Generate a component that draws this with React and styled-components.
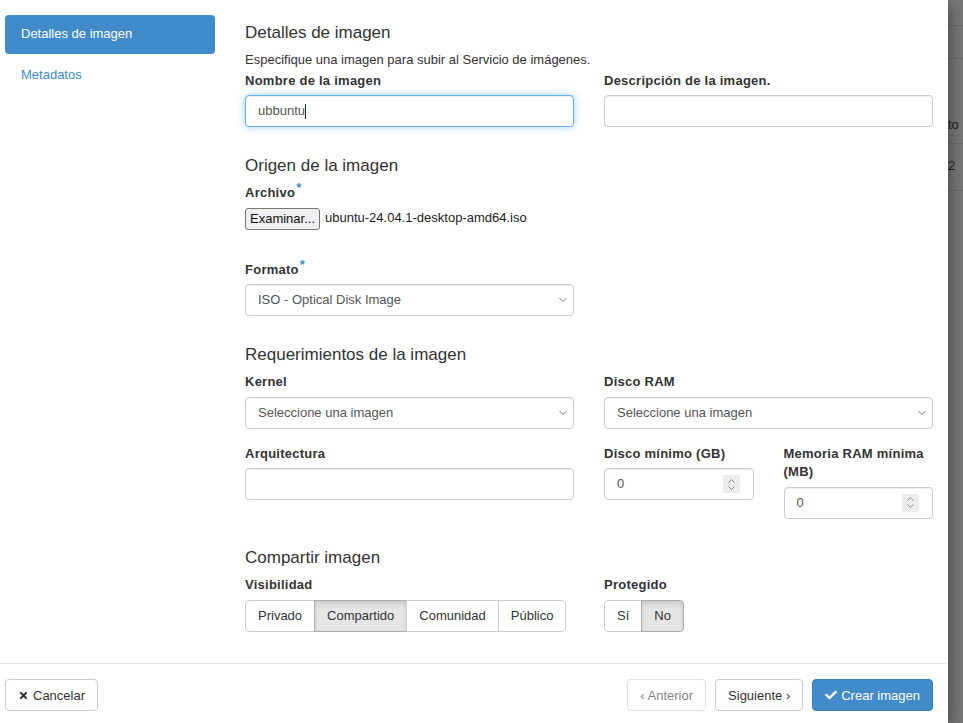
import React from "react";
import styled, { createGlobalStyle, css } from "styled-components";
import { FaTimes, FaCheck } from "react-icons/fa";

const GlobalStyle = createGlobalStyle`
  html, body {
    margin: 0;
    padding: 0;
  }
  body {
    font-family: "Liberation Sans", Arial, Helvetica, sans-serif;
    font-size: 13px;
    line-height: 1.42857;
    color: #333;
    background: #fff;
  }
  * { box-sizing: border-box; }
`;

const Page = styled.div`
  display: flex;
  height: 100vh;
  overflow: hidden;
`;

const Modal = styled.div`
  width: 948px;
  flex: none;
  display: flex;
  flex-direction: column;
  background: #fff;
  box-shadow: 0 5px 15px rgba(0, 0, 0, 0.5);
  position: relative;
  z-index: 1;
`;

const ModalBody = styled.div`
  flex: 1;
  display: flex;
  min-height: 0;
`;

const Sidebar = styled.nav`
  width: 230px;
  flex: none;
  padding: 15px 15px 0 5px;
  display: flex;
  flex-direction: column;
  gap: 2px;
`;

const NavItem = styled.a`
  height: 39px;
  display: flex;
  align-items: center;
  padding: 0 16px;
  border-radius: 4px;
  color: #428bca;
  text-decoration: none;
  ${(p) =>
    p.$active &&
    css`
      background: #428bca;
      color: #fff;
    `}
`;

const Content = styled.div`
  flex: 1;
  padding: 0 15px;
`;

const SectionTitle = styled.h4`
  font-size: 17px;
  font-weight: normal;
  line-height: 20px;
  margin: ${(p) => p.$mt ?? 14}px 0 8px;
`;

const Help = styled.p`
  margin: 0 0 2px;
`;

const Row = styled.div`
  display: grid;
  grid-template-columns: 1fr 1fr;
  column-gap: 30px;
  align-items: start;
`;

const Group = styled.div`
  margin-bottom: ${(p) => p.$mb ?? 15}px;
`;

const Label = styled.label`
  display: block;
  font-weight: bold;
  letter-spacing: 0.25px;
  margin-bottom: 5px;
`;

const Req = styled.span`
  color: #428bca;
  font-size: 13px;
  vertical-align: top;
  position: relative;
  top: -5px;
  margin-left: 1px;
`;

const field = css`
  height: 32px;
  width: 100%;
  display: flex;
  align-items: center;
  padding: 0 12px;
  border: 1px solid #ccc;
  border-radius: 4px;
  background: #fff;
  color: #555;
  font-family: inherit;
  font-size: 13px;
  box-shadow: inset 0 1px 1px rgba(0, 0, 0, 0.075);
`;

const Input = styled.input`
  ${field}
  outline: none;
`;

const FocusedField = styled.div`
  ${field}
  border-color: #66afe9;
  box-shadow: inset 0 1px 1px rgba(0, 0, 0, 0.075),
    0 0 8px rgba(102, 175, 233, 0.6);
`;

const Caret = styled.span`
  display: inline-block;
  width: 1px;
  height: 15px;
  background: #222;
`;

const SelectBox = styled.div`
  ${field}
  justify-content: space-between;
  padding-right: 5px;
`;

const NumberBox = styled.div`
  ${field}
  justify-content: space-between;
  padding-right: 13px;
`;

const Spinner = styled.span`
  width: 17px;
  height: 18px;
  border-radius: 2px;
  background: #ececec;
  display: flex;
  align-items: center;
  justify-content: center;
`;

const FileRow = styled.div`
  display: flex;
  align-items: center;
  gap: 5px;
`;

const FileButton = styled.button`
  height: 22px;
  padding: 0 4px;
  border: 1px solid #767676;
  border-radius: 3px;
  background: #efefef;
  color: #111;
  font-family: inherit;
  font-size: 13px;
`;

const FileName = styled.span`
  color: #222;
`;

const BtnGroup = styled.div`
  display: inline-flex;
`;

const Btn = styled.button`
  height: 32px;
  padding: 0 12px;
  display: inline-flex;
  align-items: center;
  gap: 4px;
  font-family: inherit;
  font-size: 13px;
  color: #333;
  background: #fff;
  border: 1px solid #ccc;
  border-radius: 4px;
  ${(p) =>
    p.$active &&
    css`
      background: #e6e6e6;
      border-color: #adadad;
      box-shadow: inset 0 3px 5px rgba(0, 0, 0, 0.125);
    `}
  ${(p) =>
    p.$primary &&
    css`
      background: #428bca;
      border-color: #357ebd;
      color: #fff;
    `}
  ${(p) =>
    p.$disabled &&
    css`
      opacity: 0.6;
    `}
  ${BtnGroup} & {
    border-radius: 0;
    margin-left: -1px;
  }
  ${BtnGroup} &:first-child {
    margin-left: 0;
    border-radius: 4px 0 0 4px;
  }
  ${BtnGroup} &:last-child {
    border-radius: 0 4px 4px 0;
  }
`;

const Footer = styled.div`
  border-top: 1px solid #e5e5e5;
  padding: 15px 15px 12px 5px;
  display: flex;
  align-items: center;
  justify-content: space-between;
`;

const FooterRight = styled.div`
  display: flex;
  gap: 9px;
`;

const Backdrop = styled.div`
  flex: 1;
  background: #777;
  overflow: hidden;
  color: #1e1e1e;
`;

const BackRow = styled.div`
  height: ${(p) => p.$h}px;
  border-bottom: 1px solid #6a6a6a;
  display: flex;
  align-items: flex-end;
  padding-bottom: ${(p) => p.$pb ?? 0}px;
  white-space: nowrap;
`;

const Chevron = () => (
  <svg width="10" height="6" viewBox="0 0 10 6">
    <polyline points="1.5,1 5,4.5 8.5,1" fill="none" stroke="#777" strokeWidth="1" />
  </svg>
);

const SpinIcon = () => (
  <Spinner>
    <svg width="9" height="13" viewBox="0 0 9 13">
      <polyline points="1.5,4.5 4.5,1.5 7.5,4.5" fill="none" stroke="#888" strokeWidth="1" />
      <polyline points="1.5,8.5 4.5,11.5 7.5,8.5" fill="none" stroke="#888" strokeWidth="1" />
    </svg>
  </Spinner>
);

export default function App() {
  return (
    <>
      <GlobalStyle />
      <Page>
        <Modal>
          <ModalBody>
            <Sidebar>
              <NavItem $active>Detalles de imagen</NavItem>
              <NavItem>Metadatos</NavItem>
            </Sidebar>
            <Content>
              <SectionTitle $mt={23}>Detalles de imagen</SectionTitle>
              <Help>Especifique una imagen para subir al Servicio de imágenes.</Help>
              <Row>
                <Group>
                  <Label>Nombre de la imagen</Label>
                  <FocusedField>
                    ubbuntu
                    <Caret />
                  </FocusedField>
                </Group>
                <Group>
                  <Label>Descripción de la imagen.</Label>
                  <Input />
                </Group>
              </Row>

              <SectionTitle>Origen de la imagen</SectionTitle>
              <Row>
                <Group $mb={31}>
                  <Label>
                    Archivo<Req>*</Req>
                  </Label>
                  <FileRow>
                    <FileButton>Examinar...</FileButton>
                    <FileName>ubuntu-24.04.1-desktop-amd64.iso</FileName>
                  </FileRow>
                </Group>
              </Row>
              <Row>
                <Group>
                  <Label>
                    Formato<Req>*</Req>
                  </Label>
                  <SelectBox>
                    ISO - Optical Disk Image
                    <Chevron />
                  </SelectBox>
                </Group>
              </Row>

              <SectionTitle $mt={14}>Requerimientos de la imagen</SectionTitle>
              <Row>
                <Group $mb={16}>
                  <Label>Kernel</Label>
                  <SelectBox>
                    Seleccione una imagen
                    <Chevron />
                  </SelectBox>
                </Group>
                <Group $mb={16}>
                  <Label>Disco RAM</Label>
                  <SelectBox>
                    Seleccione una imagen
                    <Chevron />
                  </SelectBox>
                </Group>
              </Row>
              <Row>
                <Group>
                  <Label>Arquitectura</Label>
                  <Input />
                </Group>
                <Row>
                  <Group>
                    <Label>Disco mínimo (GB)</Label>
                    <NumberBox>
                      0
                      <SpinIcon />
                    </NumberBox>
                  </Group>
                  <Group>
                    <Label>Memoria RAM mínima (MB)</Label>
                    <NumberBox>
                      0
                      <SpinIcon />
                    </NumberBox>
                  </Group>
                </Row>
              </Row>

              <SectionTitle $mt={14}>Compartir imagen</SectionTitle>
              <Row>
                <Group>
                  <Label>Visibilidad</Label>
                  <BtnGroup>
                    <Btn>Privado</Btn>
                    <Btn $active>Compartido</Btn>
                    <Btn>Comunidad</Btn>
                    <Btn>Público</Btn>
                  </BtnGroup>
                </Group>
                <Group>
                  <Label>Protegido</Label>
                  <BtnGroup>
                    <Btn>Sí</Btn>
                    <Btn $active>No</Btn>
                  </BtnGroup>
                </Group>
              </Row>
            </Content>
          </ModalBody>
          <Footer>
            <Btn>
              <FaTimes size={11} /> Cancelar
            </Btn>
            <FooterRight>
              <Btn $disabled>‹ Anterior</Btn>
              <Btn>Siguiente ›</Btn>
              <Btn $primary>
                <FaCheck size={12} /> Crear imagen
              </Btn>
            </FooterRight>
          </Footer>
        </Modal>
        <Backdrop>
          <BackRow $h={26} />
          <BackRow $h={33} />
          <BackRow $h={85} $pb={8}>to</BackRow>
          <BackRow $h={47} $pb={14}>2</BackRow>
        </Backdrop>
      </Page>
    </>
  );
}
